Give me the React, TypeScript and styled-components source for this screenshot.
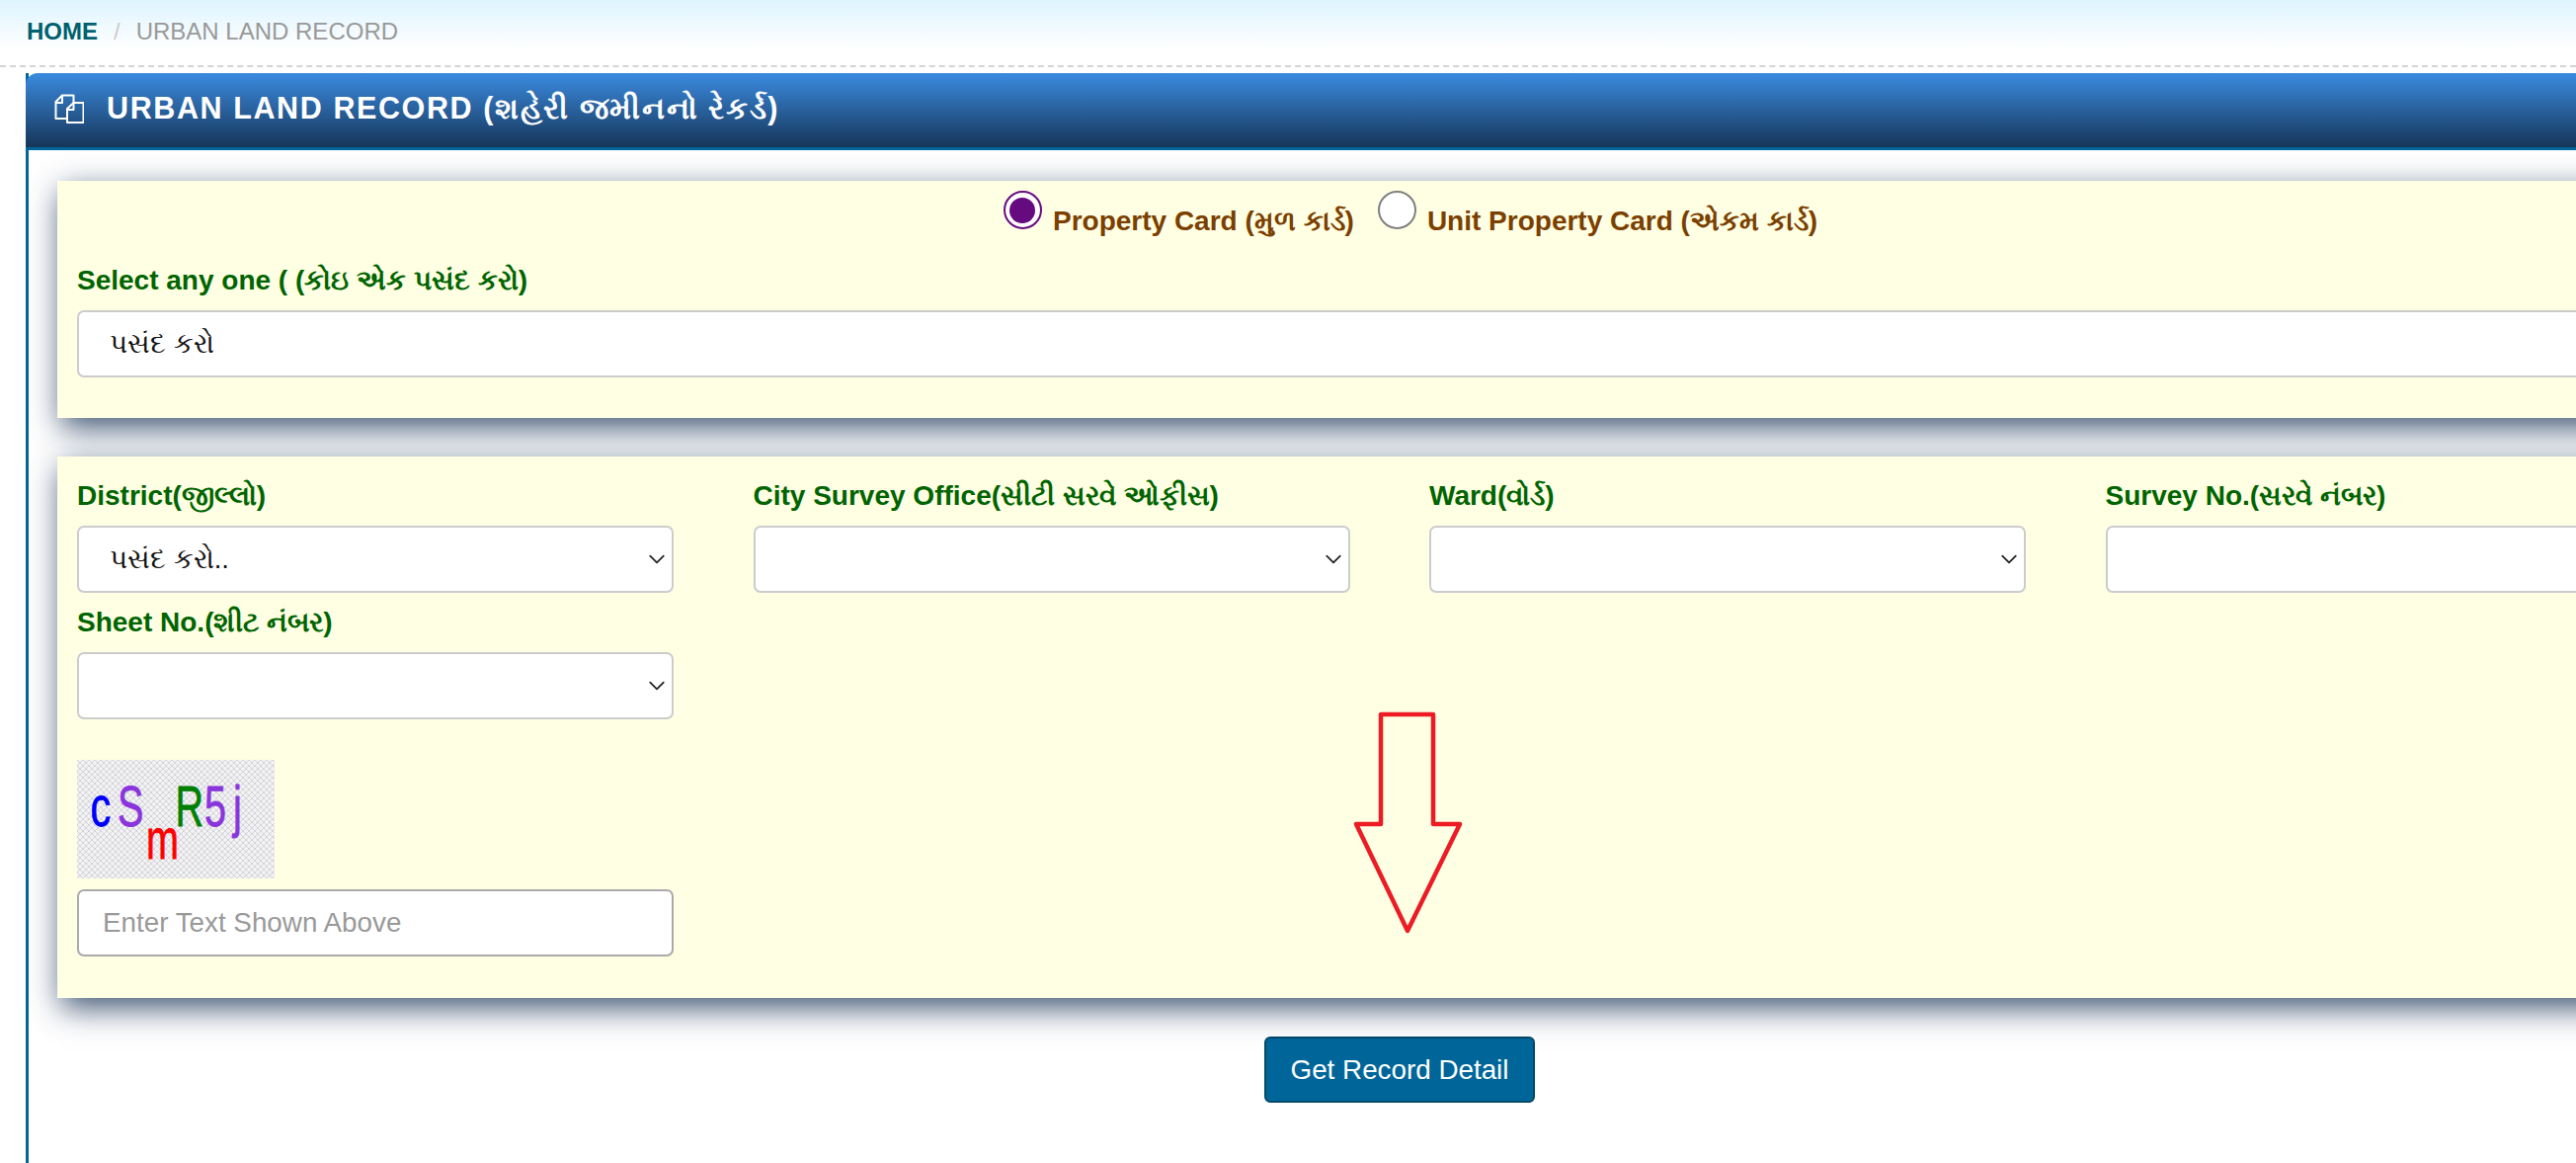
import React from 'react';
import styled, { createGlobalStyle } from 'styled-components';

const GlobalStyle = createGlobalStyle`
  html, body {
    margin: 0;
    padding: 0;
    background: #fff;
    overflow: hidden;
  }
  body {
    font-family: "Liberation Sans", Arial, sans-serif;
  }
`;

const Page = styled.div`
  width: 2608px;
  height: 1177px;
  overflow: hidden;
  background: linear-gradient(to bottom, #def4ff 0, #fff 50px);
`;

const Breadcrumb = styled.nav`
  height: 68px;
  box-sizing: border-box;
  padding: 18px 0 0 27px;
  display: flex;
  gap: 16px;
  font-size: 24px;
  line-height: 27px;
  border-bottom: 2px dashed #d4d4d4;
`;

const Crumb = styled.span<{ $active?: boolean }>`
  color: ${p => (p.$active ? '#00606e' : '#999')};
  font-weight: ${p => (p.$active ? 700 : 400)};
`;

const Slash = styled.span`
  color: #ccc;
`;

const Panel = styled.section`
  width: 2782px;
  margin: 6px 0 0 26px;
  height: 1103px;
  border-left: 3px solid #006699;
  box-sizing: border-box;
`;

const PanelHead = styled.header`
  margin-left: -3px;
  height: 78px;
  box-sizing: border-box;
  padding: 0 0 3px 29px;
  display: flex;
  align-items: center;
  gap: 23px;
  color: #fff;
  font-size: 30.5px;
  font-weight: 700;
  letter-spacing: 1.6px;
  border-radius: 12px 0 0 0;
  border-bottom: 3px solid #006699;
  background: linear-gradient(to bottom, #3a8be0 0, #163558 100%);
`;

const PanelBody = styled.div`
  padding: 31px 0 0 29px;
  display: flex;
  flex-direction: column;
  gap: 39px;
`;

const Card = styled.div`
  position: relative;
  width: 2718px;
  box-sizing: border-box;
  background: #ffffe4;
  padding: 0 20px;
  box-shadow: 4px 10px 30px rgba(30, 55, 90, 0.85);
`;

const RadioRow = styled.div`
  height: 86px;
  padding: 10px 0 0 22px;
  box-sizing: border-box;
  display: flex;
  justify-content: center;
`;

const RadioLabel = styled.label`
  display: flex;
  align-items: flex-start;
  gap: 11px;
  margin: 0 12px;
  color: #7b3f00;
  font-size: 28px;
  font-weight: 700;
`;

const RadioText = styled.span`
  margin-top: 15px;
`;

const RadioMark = styled.span<{ $checked?: boolean }>`
  width: 39px;
  height: 39px;
  box-sizing: border-box;
  border-radius: 50%;
  background: #fff;
  border: 2px solid ${p => (p.$checked ? '#660a80' : '#808080')};
  display: flex;
  align-items: center;
  justify-content: center;
  &::after {
    content: '';
    display: ${p => (p.$checked ? 'block' : 'none')};
    width: 26px;
    height: 26px;
    border-radius: 50%;
    background: #660a80;
  }
`;

const Label = styled.label`
  display: block;
  color: #006400;
  font-size: 28px;
  font-weight: 700;
  line-height: 30px;
`;

const Box = styled.div<{ $strong?: boolean }>`
  position: relative;
  height: 68px;
  box-sizing: border-box;
  margin-top: 15px;
  padding-left: 31px;
  display: flex;
  align-items: center;
  background: #fff;
  border: 2px solid ${p => (p.$strong ? '#aaa' : '#ccc')};
  border-radius: 7px;
  color: #111;
  font-size: 27.5px;
`;

const Placeholder = styled.span`
  color: #999;
  font-size: 27.8px;
  margin-left: -7px;
`;

const Chevron = styled.svg`
  position: absolute;
  right: 6px;
  top: 23px;
  width: 18px;
  height: 18px;
`;

const CardOne = styled.div`
  padding: 0 0 41px;
  width: 2678px;
`;

const Grid = styled.div`
  padding-top: 25px;
  display: grid;
  grid-template-columns: repeat(4, 604px);
  column-gap: 80.5px;
  row-gap: 15px;
`;

const CaptchaWrap = styled.div`
  margin-top: 41px;
  width: 200px;
  height: 120px;
  svg {
    display: block;
  }
`;

const CaptchaInputRow = styled.div`
  width: 604px;
  padding-bottom: 42px;
  ${Box} {
    margin-top: 11px;
  }
`;

const Arrow = styled.svg`
  position: absolute;
  left: 1311px;
  top: 257px;
  width: 112px;
  height: 226px;
`;

const ButtonRow = styled.div`
  display: flex;
  justify-content: center;
  width: 2718px;
`;

const Button = styled.button`
  height: 67px;
  width: 274px;
  background: #006699;
  border: 2px solid #004a6b;
  border-radius: 6px;
  color: #fff;
  font-family: inherit;
  font-size: 27.8px;
`;

const ChevronIcon = () => (
  <Chevron viewBox="0 0 16 16">
    <path d="M2 5l6 6 6-6" fill="none" stroke="#222" strokeWidth="1.6" strokeLinecap="round" strokeLinejoin="round" />
  </Chevron>
);

const Select: React.FC<{ value?: string }> = ({ value }) => (
  <Box>
    {value}
    <ChevronIcon />
  </Box>
);

const FilesIcon = () => (
  <svg width="30" height="30" viewBox="0 0 30 30" fill="none" stroke="#fff" strokeWidth="2" strokeLinejoin="round">
    <path d="M12 25H1.5V8L8 1.5h11.5V9" />
    <path d="M8 2v7H2" />
    <path d="M13 29V15l6.5-6h10v20z" />
    <path d="M19.5 9v7H13.5" />
  </svg>
);

const Captcha = () => (
  <svg width="200" height="120" viewBox="0 0 200 120">
    <defs>
      <pattern id="noise" width="6" height="6" patternUnits="userSpaceOnUse">
        <rect width="6" height="6" fill="#f2f2f4" />
        <path d="M0 0l6 6M6 0L0 6" stroke="#d4d4d8" strokeWidth="1" />
      </pattern>
    </defs>
    <rect width="200" height="120" fill="url(#noise)" />
    <g fontFamily="'Liberation Sans', sans-serif" fontSize="44" strokeWidth="0.6">
      <text transform="translate(13.5 67) scale(0.95 1.3)" fill="#0000ff" stroke="#0000ff">c</text>
      <text transform="translate(41 67) scale(0.9 1.3)" fill="#8a35dc" stroke="#8a35dc">S</text>
      <text transform="translate(70 100) scale(0.9 1.3)" fill="#ff0000" stroke="#ff0000">m</text>
      <text transform="translate(99.5 67) scale(0.9 1.3)" fill="#008000" stroke="#008000">R</text>
      <text transform="translate(129 67) scale(0.9 1.3)" fill="#8a35dc" stroke="#8a35dc">5</text>
      <text transform="translate(158 67) scale(0.9 1.3)" fill="#8a35dc" stroke="#8a35dc">j</text>
    </g>
  </svg>
);

export default function App() {
  return (
    <Page>
      <GlobalStyle />
      <Breadcrumb>
        <Crumb $active>HOME</Crumb>
        <Slash>/</Slash>
        <Crumb>URBAN LAND RECORD</Crumb>
      </Breadcrumb>
      <Panel>
        <PanelHead>
          <FilesIcon />
          URBAN LAND RECORD (શહેરી જમીનનો રેકર્ડ)
        </PanelHead>
        <PanelBody>
          <Card>
            <RadioRow>
              <RadioLabel>
                <RadioMark $checked />
                <RadioText>Property Card (મુળ કાર્ડ)</RadioText>
              </RadioLabel>
              <RadioLabel>
                <RadioMark />
                <RadioText>Unit Property Card (એકમ કાર્ડ)</RadioText>
              </RadioLabel>
            </RadioRow>
            <CardOne>
              <Label>Select any one ( (કોઇ એક પસંદ કરો)</Label>
              <Select value="પસંદ કરો" />
            </CardOne>
          </Card>
          <Card>
            <Grid>
              <div>
                <Label>District(જીલ્લો)</Label>
                <Select value="પસંદ કરો.." />
              </div>
              <div>
                <Label>City Survey Office(સીટી સરવે ઓફીસ)</Label>
                <Select />
              </div>
              <div>
                <Label>Ward(વોર્ડ)</Label>
                <Select />
              </div>
              <div>
                <Label>Survey No.(સરવે નંબર)</Label>
                <Select />
              </div>
              <div>
                <Label>Sheet No.(શીટ નંબર)</Label>
                <Select />
              </div>
            </Grid>
            <CaptchaWrap>
              <Captcha />
            </CaptchaWrap>
            <CaptchaInputRow>
              <Box $strong>
                <Placeholder>Enter Text Shown Above</Placeholder>
              </Box>
            </CaptchaInputRow>
            <Arrow viewBox="0 0 112 226">
              <path d="M29 4h53v111h27l-53 108L4 115h25z" fill="none" stroke="#ed1c24" strokeWidth="4.5" strokeLinejoin="round" />
            </Arrow>
          </Card>
          <ButtonRow>
            <Button>Get Record Detail</Button>
          </ButtonRow>
        </PanelBody>
      </Panel>
    </Page>
  );
}
